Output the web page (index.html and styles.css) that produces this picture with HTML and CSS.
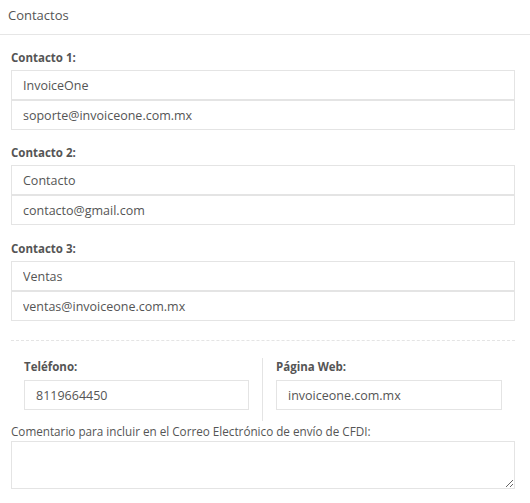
FILE: index.html
```html
<!DOCTYPE html>
<html lang="es">
<head>
<meta charset="utf-8">
<link rel="stylesheet" href="styles.css">
</head>
<body>
<div class="panel">
  <div class="panel-heading">Contactos</div>
  <div class="panel-body">
    <div class="group">
      <label class="label">Contacto 1:</label>
      <input class="field" type="text" value="InvoiceOne">
      <input class="field" type="text" value="soporte@invoiceone.com.mx">
    </div>
    <div class="group">
      <label class="label">Contacto 2:</label>
      <input class="field" type="text" value="Contacto">
      <input class="field" type="text" value="contacto@gmail.com">
    </div>
    <div class="group group-last">
      <label class="label">Contacto 3:</label>
      <input class="field" type="text" value="Ventas">
      <input class="field" type="text" value="ventas@invoiceone.com.mx">
    </div>
    <div class="divider"></div>
    <div class="row">
      <div class="col col-left">
        <label class="label col-label">Teléfono:</label>
        <input class="field" type="text" value="8119664450">
      </div>
      <div class="col">
        <label class="label col-label">Página Web:</label>
        <input class="field" type="text" value="invoiceone.com.mx">
      </div>
    </div>
    <label class="comment-label">Comentario para incluir en el Correo Electrónico de envío de CFDI:</label>
    <textarea class="comment"></textarea>
  </div>
</div>
</body>
</html>
```
FILE: styles.css
```css
html, body {
  margin: 0;
  padding: 0;
  background: #fff;
}
body {
  font-family: "Open Sans", "DejaVu Sans", sans-serif;
  color: #555;
  font-size: 13px;
}
.panel-heading {
  height: 35px;
  box-sizing: border-box;
  padding: 5px 8px 0;
  line-height: 20px;
  font-size: 13px;
  color: #555;
  border-bottom: 1px solid #e6e6e6;
}
.panel-body {
  padding: 0 15px 0 11px;
}
.group {
  margin-top: 15px;
  display: flex;
  flex-direction: column;
}
.group-last {
  margin-top: 16px;
}
.label {
  display: block;
  font-weight: 700;
  font-size: 11.5px;
  line-height: 16px;
  margin-bottom: 4px;
  color: #555;
}
.field {
  display: block;
  box-sizing: border-box;
  width: 100%;
  height: 30px;
  margin: 0;
  padding: 0 11px;
  border: 1px solid #e4e4e4;
  border-radius: 0;
  font-family: "Open Sans", "DejaVu Sans", sans-serif;
  font-size: 12.5px;
  color: #555;
  background: #fff;
  outline: none;
}
.divider {
  margin-top: 19px;
  border-top: 1px dashed #e4e4e4;
}
.row {
  margin-top: 17px;
  display: grid;
  grid-template-columns: 1fr 1fr;
}
.col {
  padding: 0 13px 11px;
}
.col-left {
  border-right: 1px solid #e4e4e4;
}
.col-label {
  line-height: 18px;
  margin-bottom: 4px;
}
.comment-label {
  display: block;
  font-size: 11.7px;
  line-height: 20px;
  color: #555;
}
.comment {
  display: block;
  box-sizing: border-box;
  width: 100%;
  height: 48px;
  margin: 0;
  border: 1px solid #e4e4e4;
  border-radius: 0;
  font-family: "Open Sans", sans-serif;
  font-size: 13px;
  background: #fff;
  outline: none;
}
```
